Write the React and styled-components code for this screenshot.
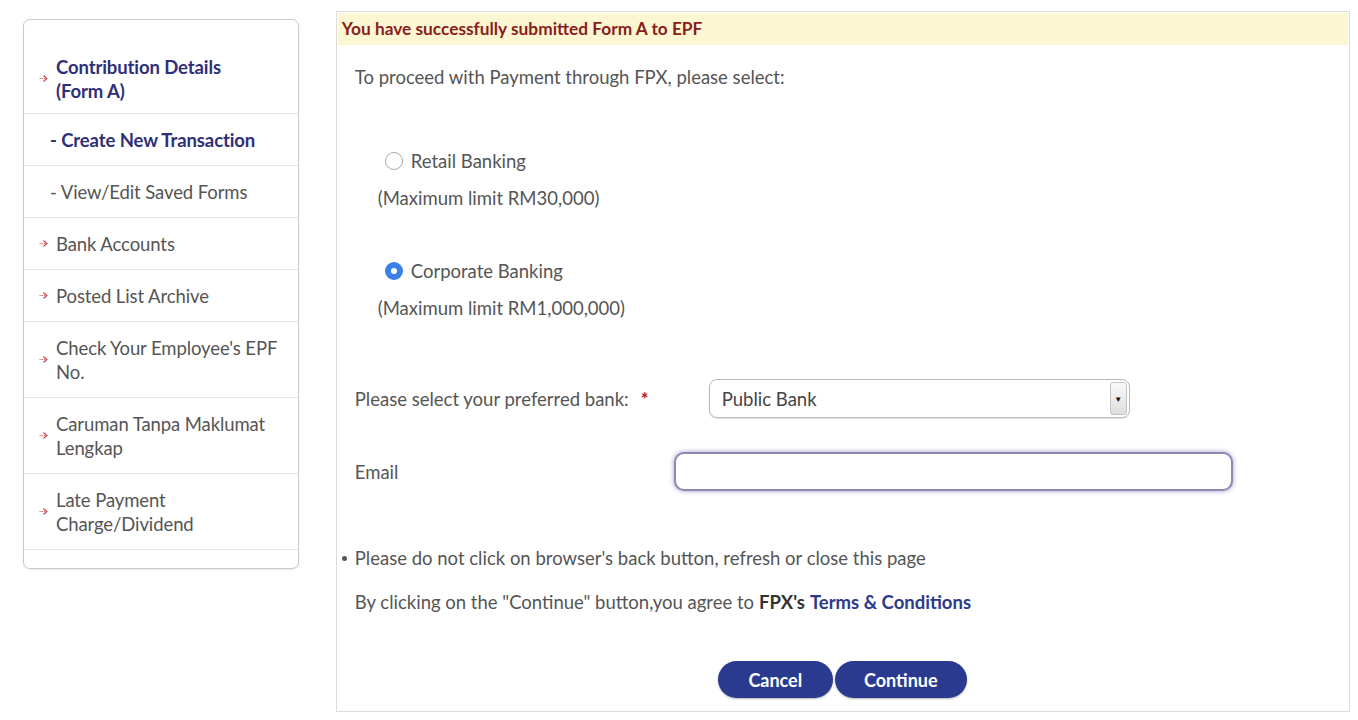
import React, { useState } from "react";
import styled, { createGlobalStyle } from "styled-components";

const GlobalStyle = createGlobalStyle`
  html, body {
    margin: 0;
    padding: 0;
    background: #ffffff;
    font-family: Lato, "Open Sans", "Liberation Sans", sans-serif;
  }
  * { box-sizing: border-box; }
`;

const Page = styled.div`
  display: flex;
  align-items: flex-start;
  gap: 37px;
  padding: 11px 8px 8px 23px;
  width: 1358px;
  height: 720px;
  overflow: hidden;
`;

const Sidebar = styled.nav`
  width: 276px;
  margin-top: 8px;
  padding: 24px 0 18px;
  border: 1px solid #c9c9c9;
  border-radius: 7px;
  background: #fff;
  box-shadow: 0 1px 2px rgba(0, 0, 0, 0.08);
`;

const NavItem = styled.div`
  display: flex;
  align-items: center;
  gap: 8px;
  min-height: ${(p) => (p.tall ? "76px" : "52px")};
  padding: ${(p) => (p.sub ? "0 0 0 26px" : "0 4px 0 15px")};
  border-bottom: 1px solid #e4e4e4;
  font-size: 18.5px;
  line-height: 24px;
  letter-spacing: -0.1px;
  color: ${(p) => (p.active ? "#2f2f78" : "#555")};
  font-weight: ${(p) => (p.active ? 700 : 400)};
  &:first-child { min-height: 70px; }
`;

const Arrow = () => (
  <svg width="9" height="9" viewBox="0 0 9 9" style={{ flex: "none" }}>
    <path d="M0.5 4.5 H7.5" stroke="#d07070" strokeWidth="1.1" strokeDasharray="1.3 0.8" />
    <path d="M4.5 1.5 L7.8 4.5 L4.5 7.5" stroke="#c04848" strokeWidth="1.2" fill="none" />
  </svg>
);

const Panel = styled.main`
  width: 1015px;
  height: 701px;
  border: 1px solid #dcdcdc;
  padding: 1px;
  display: flex;
  flex-direction: column;
`;

const Banner = styled.div`
  height: 32px;
  background: #fcf7d2;
  color: #8a1c1c;
  font-weight: 700;
  font-size: 17.3px;
  line-height: 32px;
  padding-left: 4px;
`;

const Content = styled.div`
  padding-left: 17px;
  display: flex;
  flex-direction: column;
  color: #555;
  font-size: 18.5px;
  line-height: 24px;
`;

const Line = styled.div`
  margin-top: ${(p) => p.mt}px;
  padding-left: ${(p) => p.indent || 0}px;
  display: flex;
  align-items: center;
`;

const Radio = styled.span`
  width: 18px;
  height: 18px;
  border-radius: 50%;
  margin-right: 8px;
  display: inline-flex;
  align-items: center;
  justify-content: center;
  border: ${(p) => (p.checked ? "none" : "1px solid #a9a9a9")};
  background: ${(p) => (p.checked ? "#3b80e8" : "#fff")};
  &::after {
    content: "";
    width: 6px;
    height: 6px;
    border-radius: 50%;
    background: #fff;
    display: ${(p) => (p.checked ? "block" : "none")};
  }
`;

const FormRow = styled.div`
  margin-top: ${(p) => p.mt}px;
  display: flex;
  align-items: center;
`;

const Label = styled.div`
  width: ${(p) => p.w}px;
  display: flex;
  align-items: center;
`;

const Required = styled.span`
  color: #b02030;
  margin-left: 12px;
  font-weight: 700;
`;

const SelectBox = styled.div`
  width: 421px;
  height: 39px;
  border: 1px solid #b9b9b9;
  border-radius: 8px;
  display: flex;
  align-items: stretch;
  overflow: hidden;
  box-shadow: 0 1px 1px rgba(0, 0, 0, 0.12);
`;

const SelectText = styled.div`
  flex: 1;
  padding-left: 12px;
  display: flex;
  align-items: center;
  color: #444;
`;

const SelectArrow = styled.div`
  width: 17px;
  margin: 2px 2px 2px 0;
  border: 1px solid #c4c4c4;
  border-radius: 3px;
  background: linear-gradient(#fafafa, #dedede);
  display: flex;
  align-items: center;
  justify-content: center;
  font-size: 8px;
  color: #111;
`;

const TextInput = styled.input`
  width: 559px;
  height: 39px;
  border: 2px solid #8e88b4;
  border-radius: 10px;
  box-shadow: 0 0 5px rgba(110, 100, 170, 0.65);
  outline: none;
  font: inherit;
  padding: 0 10px;
`;

const Bullet = styled.span`
  width: 5px;
  height: 5px;
  border-radius: 50%;
  background: #555;
  margin: 0 8px 0 -13px;
`;

const Strong = styled.b`
  color: #333;
  margin: 0 5px;
`;

const Link = styled.a`
  color: #2b3a8a;
  font-weight: 700;
  text-decoration: none;
`;

const Buttons = styled.div`
  margin-top: 47px;
  padding-left: 363px;
  display: flex;
  gap: 2px;
`;

const Button = styled.button`
  height: 37px;
  width: ${(p) => p.w}px;
  border: none;
  border-radius: 19px;
  background: #2a3a8f;
  color: #fff;
  font-family: inherit;
  font-weight: 700;
  font-size: 18px;
  box-shadow: 0 1px 2px rgba(0, 0, 0, 0.3);
  cursor: pointer;
`;

const menu = [
  { label: <>Contribution Details<br />(Form A)</>, arrow: true, active: true },
  { label: "- Create New Transaction", sub: true, active: true },
  { label: "- View/Edit Saved Forms", sub: true },
  { label: "Bank Accounts", arrow: true },
  { label: "Posted List Archive", arrow: true },
  { label: <>Check Your Employee's EPF<br />No.</>, arrow: true, tall: true },
  { label: <>Caruman Tanpa Maklumat<br />Lengkap</>, arrow: true, tall: true },
  { label: <>Late Payment<br />Charge/Dividend</>, arrow: true, tall: true },
];

const App = () => {
  const [type, setType] = useState("corporate");
  const [email, setEmail] = useState("");

  return (
    <>
      <GlobalStyle />
      <Page>
        <Sidebar>
          {menu.map((m, i) => (
            <NavItem key={i} sub={m.sub} tall={m.tall} active={m.active}>
              {m.arrow && <Arrow />}
              <span>{m.label}</span>
            </NavItem>
          ))}
        </Sidebar>
        <Panel>
          <Banner>You have successfully submitted Form A to EPF</Banner>
          <Content>
            <Line mt={20}>To proceed with Payment through FPX, please select:</Line>
            <Line mt={60} indent={30} onClick={() => setType("retail")}>
              <Radio checked={type === "retail"} />Retail Banking
            </Line>
            <Line mt={13} indent={23}>(Maximum limit RM30,000)</Line>
            <Line mt={49} indent={30} onClick={() => setType("corporate")}>
              <Radio checked={type === "corporate"} />Corporate Banking
            </Line>
            <Line mt={13} indent={23}>(Maximum limit RM1,000,000)</Line>
            <FormRow mt={59}>
              <Label w={354}>Please select your preferred bank:<Required>*</Required></Label>
              <SelectBox>
                <SelectText>Public Bank</SelectText>
                <SelectArrow>▼</SelectArrow>
              </SelectBox>
            </FormRow>
            <FormRow mt={34}>
              <Label w={319}>Email</Label>
              <TextInput value={email} onChange={(e) => setEmail(e.target.value)} />
            </FormRow>
            <Line mt={55}><Bullet />Please do not click on browser's back button, refresh or close this page</Line>
            <Line mt={20}>
              By clicking on the "Continue" button,you agree to<Strong>FPX's</Strong><Link href="#">Terms &amp; Conditions</Link>
            </Line>
            <Buttons>
              <Button w={115}>Cancel</Button>
              <Button w={132}>Continue</Button>
            </Buttons>
          </Content>
        </Panel>
      </Page>
    </>
  );
};

export default App;
